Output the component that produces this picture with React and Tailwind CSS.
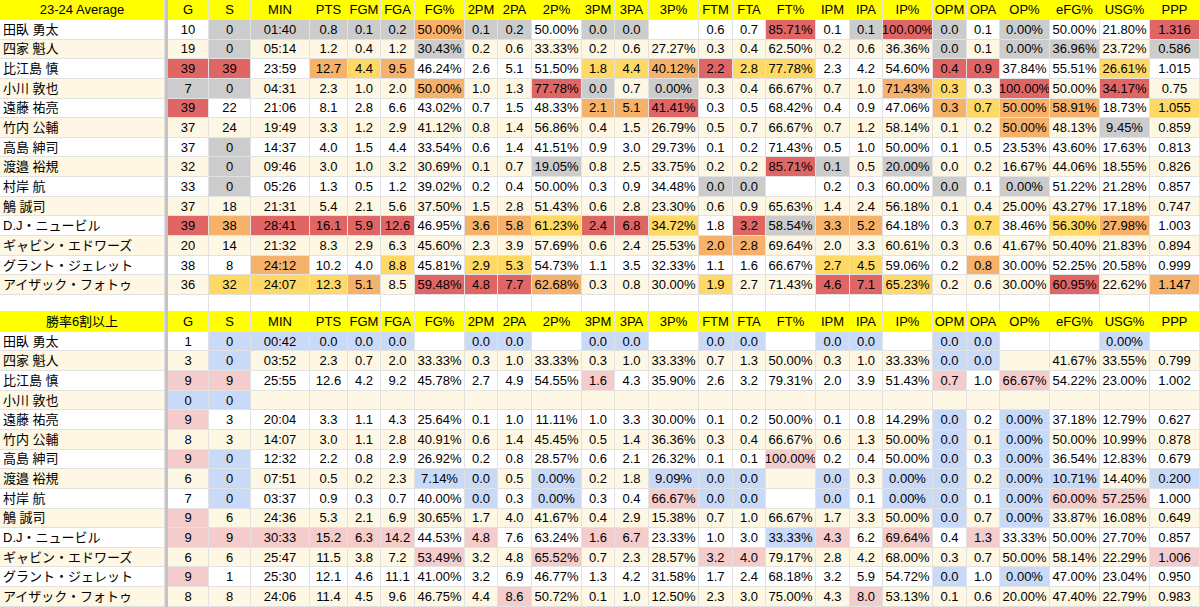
import React from "react";

const HEADERS = ["G", "S", "MIN", "PTS", "FGM", "FGA", "FG%", "2PM", "2PA", "2P%", "3PM", "3PA", "3P%", "FTM", "FTA", "FT%", "IPM", "IPA", "IP%", "OPM", "OPA", "OP%", "eFG%", "USG%", "PPP"];

const GRID =
  "grid grid-cols-[165px_3px_41px_42px_59px_38px_33px_34px_50px_33px_34px_50px_33px_34px_50px_34px_33px_50px_34px_33px_50px_34px_33px_50px_50px_50px_50px]";

const BG = {
  r: "bg-[#e06666]",
  o: "bg-[#f6b26b]",
  y: "bg-[#ffd966]",
  g: "bg-[#cccccc]",
  p: "bg-[#f4cccc]",
  b: "bg-[#c9daf8]",
};

const NAMES = ["田臥 勇太", "四家 魁人", "比江島 慎", "小川 敦也", "遠藤 祐亮", "竹内 公輔", "高島 紳司", "渡邉 裕規", "村岸 航", "鵤 誠司", "D.J・ニュービル", "ギャビン・エドワーズ", "グラント・ジェレット", "アイザック・フォトゥ"];

// "値~色" / "_" は空欄
const SEASON = [
  "10 0~g 01:40~g 0.8~g 0.1~g 0.2~g 50.00%~o 0.1~g 0.2~g 50.00% 0.0~g 0.0~g _ 0.6 0.7 85.71%~r 0.1 0.1~g 100.00%~r 0.0~g 0.1 0.00%~g 50.00% 21.80% 1.316~r",
  "19 0~g 05:14 1.2 0.4 1.2 30.43%~g 0.2 0.6 33.33% 0.2 0.6 27.27% 0.3 0.4 62.50% 0.2 0.6 36.36% 0.0~g 0.1 0.00%~g 36.96%~g 23.72% 0.586~g",
  "39~r 39~r 23:59 12.7~o 4.4~y 9.5~o 46.24% 2.6 5.1 51.50% 1.8~y 4.4~y 40.12%~o 2.2~r 2.8~y 77.78%~y 2.3 4.2 54.60% 0.4~r 0.9~r 37.84% 55.51% 26.61%~y 1.015",
  "7~g 0~g 04:31 2.3 1.0 2.0 50.00%~o 1.0 1.3 77.78%~r 0.0~g 0.7 0.00%~g 0.3 0.4 66.67% 0.7 1.0 71.43%~o 0.3~y 0.3 100.00%~r 50.00% 34.17%~r 0.75",
  "39~r 22 21:06 8.1 2.8 6.6 43.02% 0.7 1.5 48.33% 2.1~o 5.1~o 41.41%~r 0.3 0.5 68.42% 0.4 0.9 47.06% 0.3~o 0.7~y 50.00%~o 58.91%~o 18.73% 1.055~y",
  "37 24 19:49 3.3 1.2 2.9 41.12% 0.8 1.4 56.86% 0.4 1.5 26.79% 0.5 0.7 66.67% 0.7 1.2 58.14% 0.1 0.2 50.00%~o 48.13% 9.45%~g 0.859",
  "37 0~g 14:37 4.0 1.5 4.4 33.54% 0.6 1.4 41.51% 0.9 3.0 29.73% 0.1 0.2 71.43% 0.5 1.0 50.00% 0.1 0.5 23.53% 43.60% 17.63% 0.813",
  "32 0~g 09:46 3.0 1.0 3.2 30.69% 0.1 0.7 19.05%~g 0.8 2.5 33.75% 0.2 0.2 85.71%~r 0.1~g 0.5 20.00%~g 0.0 0.2 16.67% 44.06% 18.55% 0.826",
  "33 0~g 05:26 1.3 0.5 1.2 39.02% 0.2 0.4 50.00% 0.3 0.9 34.48% 0.0~g 0.0~g _ 0.2 0.3 60.00% 0.0~g 0.1 0.00%~g 51.22% 21.28% 0.857",
  "37 18 21:31 5.4 2.1 5.6 37.50% 1.5 2.8 51.43% 0.6 2.8 23.30% 0.6 0.9 65.63% 1.4 2.4 56.18% 0.1 0.4 25.00% 43.27% 17.18% 0.747",
  "39~r 38~o 28:41~r 16.1~r 5.9~r 12.6~r 46.95% 3.6~o 5.8~o 61.23%~y 2.4~r 6.8~r 34.72%~y 1.8 3.2~r 58.54%~g 3.3~o 5.2~o 64.18% 0.3 0.7~y 38.46% 56.30%~y 27.98%~o 1.003",
  "20 14 21:32 8.3 2.9 6.3 45.60% 2.3 3.9 57.69% 0.6 2.4 25.53% 2.0~o 2.8~o 69.64% 2.0 3.3 60.61% 0.3 0.6 41.67% 50.40% 21.83% 0.894",
  "38 8 24:12~o 10.2 4.0 8.8~y 45.81% 2.9~y 5.3~y 54.73% 1.1 3.5 32.33% 1.1 1.6 66.67% 2.7~y 4.5~y 59.06% 0.2 0.8~o 30.00% 52.25% 20.58% 0.999",
  "36 32~y 24:07~y 12.3~y 5.1~o 8.5 59.48%~r 4.8~r 7.7~r 62.68%~o 0.3 0.8 30.00% 1.9~y 2.7 71.43% 4.6~r 7.1~r 65.23%~y 0.2 0.6 30.00% 60.95%~r 22.62% 1.147~o",
];

const WINS = [
  "1 0~b 00:42~b 0.0~b 0.0~b 0.0~b _ 0.0~b 0.0~b _ 0.0~b 0.0~b _ 0.0~b 0.0~b _ 0.0~b 0.0~b _ 0.0~b 0.0~b _ _ 0.00%~b _",
  "3 0~b 03:52 2.3 0.7 2.0 33.33% 0.3 1.0 33.33% 0.3 1.0 33.33% 0.7 1.3 50.00% 0.3 1.0 33.33% 0.0~b 0.0~b _ 41.67% 33.55% 0.799",
  "9~p 9~p 25:55 12.6 4.2 9.2 45.78% 2.7 4.9 54.55% 1.6~p 4.3 35.90% 2.6 3.2 79.31% 2.0 3.9 51.43% 0.7~p 1.0 66.67%~p 54.22% 23.00% 1.002",
  "0~b 0~b _ _ _ _ _ _ _ _ _ _ _ _ _ _ _ _ _ _ _ _ _ _ _",
  "9~p 3 20:04 3.3 1.1 4.3 25.64% 0.1 1.0 11.11% 1.0 3.3 30.00% 0.1 0.2 50.00% 0.1 0.8 14.29% 0.0~b 0.2 0.00%~b 37.18% 12.79% 0.627",
  "8 3 14:07 3.0 1.1 2.8 40.91% 0.6 1.4 45.45% 0.5 1.4 36.36% 0.3 0.4 66.67% 0.6 1.3 50.00% 0.0~b 0.1 0.00%~b 50.00% 10.99% 0.878",
  "9~p 0~b 12:32 2.2 0.8 2.9 26.92% 0.2 0.8 28.57% 0.6 2.1 26.32% 0.1 0.1 100.00%~p 0.2 0.4 50.00% 0.0~b 0.3 0.00%~b 36.54% 12.83% 0.679",
  "6 0~b 07:51 0.5 0.2 2.3 7.14%~b 0.0~b 0.5 0.00%~b 0.2 1.8 9.09%~b 0.0~b 0.0~b _ 0.0~b 0.3 0.00%~b 0.0~b 0.2 0.00%~b 10.71%~b 14.40% 0.200~b",
  "7 0~b 03:37 0.9 0.3 0.7 40.00% 0.0~b 0.3 0.00%~b 0.3 0.4 66.67%~p 0.0~b 0.0~b _ 0.0~b 0.1 0.00%~b 0.0~b 0.1 0.00%~b 60.00%~p 57.25%~p 1.000",
  "9~p 6 24:36 5.3 2.1 6.9 30.65% 1.7 4.0 41.67% 0.4 2.9 15.38% 0.7 1.0 66.67% 1.7 3.3 50.00% 0.0~b 0.7 0.00%~b 33.87% 16.08% 0.649",
  "9~p 9~p 30:33~p 15.2~p 6.3~p 14.2~p 44.53% 4.8~p 7.6 63.24% 1.6~p 6.7~p 23.33% 1.0 3.0 33.33%~b 4.3~p 6.2 69.64%~p 0.4 1.3~p 33.33% 50.00% 27.70% 0.857",
  "6 6 25:47 11.5 3.8 7.2 53.49%~p 3.2 4.8 65.52%~p 0.7 2.3 28.57% 3.2~p 4.0~p 79.17% 2.8 4.2 68.00% 0.3 0.7 50.00% 58.14% 22.29% 1.006~p",
  "9~p 1 25:30 12.1 4.6 11.1 41.00% 3.2 6.9 46.77% 1.3 4.2 31.58% 1.7 2.4 68.18% 3.2 5.9 54.72% 0.0~b 1.0 0.00%~b 47.00% 23.04% 0.950",
  "8 8 24:06 11.4 4.5 9.6 46.75% 4.4 8.6~p 50.72% 0.1 1.0 12.50% 2.3 3.0 75.00% 4.3 8.0~p 53.13% 0.1 0.6 20.00% 47.40% 22.79% 0.983",
];

const cell = "flex items-center justify-center border-r border-b border-[#e2e2e2] overflow-hidden whitespace-nowrap";

function Divider() {
  return <div className="bg-[#c4c4c4]" />;
}

function HeaderRow({ title, h }) {
  return (
    <div className={`${GRID} ${h} bg-[#ffff00]`}>
      <div className={cell}>{title}</div>
      <Divider />
      {HEADERS.map((c) => (
        <div key={c} className={cell}>{c}</div>
      ))}
    </div>
  );
}

function DataRow({ name, line, idx }) {
  const rowBg = idx % 2 === 0 ? "bg-white" : "bg-[#fdf7e3]";
  const vals = line.split(" ").map((t) => {
    const [v, c] = t.split("~");
    return { v: v === "_" ? "" : v, c };
  });
  return (
    <div className={`${GRID} h-[19.65px] ${rowBg}`}>
      <div className={`${cell} justify-start pl-[3px]`}>{name}</div>
      <Divider />
      {vals.map((x, i) => (
        <div key={i} className={`${cell} ${x.c ? BG[x.c] : ""}`}>{x.v}</div>
      ))}
    </div>
  );
}

export default function App() {
  return (
    <div
      className="w-[1200px] h-[607px] overflow-hidden bg-white text-[13px] leading-none text-black"
      style={{ fontFamily: '"Liberation Sans", "Noto Sans CJK JP", sans-serif' }}
    >
      <HeaderRow title="23-24 Average" h="h-[20px]" />
      {SEASON.map((line, i) => (
        <DataRow key={i} name={NAMES[i]} line={line} idx={i} />
      ))}
      <div className={`${GRID} h-[17.3px] bg-white`}>
        <div className={cell} />
        <Divider />
        {HEADERS.map((c) => (
          <div key={c} className={cell} />
        ))}
      </div>
      <HeaderRow title="勝率6割以上" h="h-[19.5px]" />
      {WINS.map((line, i) => (
        <DataRow key={i} name={NAMES[i]} line={line} idx={i} />
      ))}
    </div>
  );
}
